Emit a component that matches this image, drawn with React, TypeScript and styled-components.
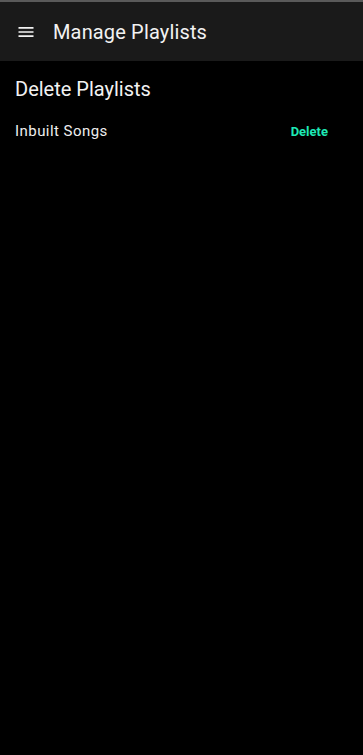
import React from "react";
import styled, { createGlobalStyle } from "styled-components";

const Global = createGlobalStyle`
  html, body { margin: 0; padding: 0; background: #000; }
  body { font-family: Roboto, "Noto Sans", sans-serif; -webkit-font-smoothing: antialiased; }
`;

const Page = styled.div`
  width: 363px;
  height: 755px;
  background: #000;
  display: flex;
  flex-direction: column;
`;

const Header = styled.header`
  border-top: 2px solid #5a5a5a;
  background: #1a1a1a;
  display: flex;
  align-items: center;
  padding: 0 0 0 16px;
  gap: 17px;
  height: 59px;
`;

const Title = styled.h1`
  margin: 0;
  font-size: 20px;
  font-weight: 400;
  color: #f2f2f2;
  letter-spacing: 0.15px;
`;

const Content = styled.main`
  padding: 16px 15px 0 15px;
  display: flex;
  flex-direction: column;
`;

const SectionTitle = styled.h2`
  margin: 0;
  font-size: 20px;
  font-weight: 400;
  color: #f2f2f2;
  line-height: 24px;
`;

const Row = styled.div`
  display: flex;
  align-items: center;
  justify-content: space-between;
  margin-top: 20px;
  height: 20px;
`;

const RowLabel = styled.span`
  font-size: 15px;
  color: #eeeeee;
  letter-spacing: 0.45px;
`;

const DeleteButton = styled.button`
  background: none;
  border: none;
  padding: 0;
  margin-right: 20px;
  font-family: inherit;
  font-size: 13px;
  font-weight: 700;
  color: #1de9b6;
  cursor: pointer;
`;

const MenuIcon = () => (
  <svg width="20" height="20" viewBox="0 0 24 24" fill="#f2f2f2">
    <path d="M3 18h18v-2H3v2zm0-5h18v-2H3v2zm0-7v2h18V6H3z" />
  </svg>
);

export default function App() {
  return (
    <Page>
      <Global />
      <Header>
        <MenuIcon />
        <Title>Manage Playlists</Title>
      </Header>
      <Content>
        <SectionTitle>Delete Playlists</SectionTitle>
        <Row>
          <RowLabel>Inbuilt Songs</RowLabel>
          <DeleteButton>Delete</DeleteButton>
        </Row>
      </Content>
    </Page>
  );
}
